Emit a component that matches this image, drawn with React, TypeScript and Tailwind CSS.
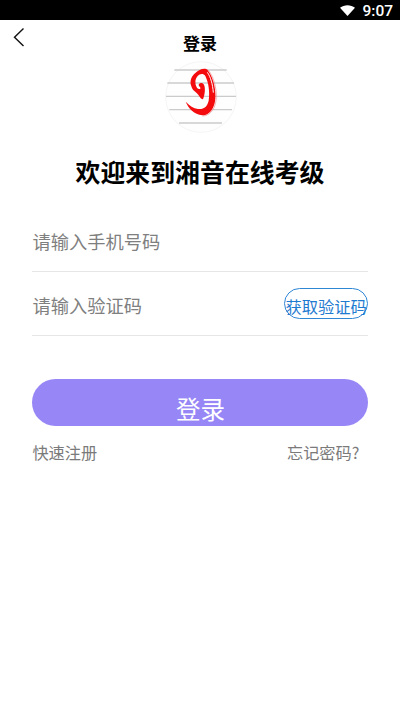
import type { FC, ReactNode } from 'react';

const StatusBar: FC = () => (
  <div className="flex h-5 items-center justify-end gap-[7px] bg-black pr-[7px] text-white">
    <svg width="15" height="11" viewBox="0 0 15 11" fill="currentColor">
      <path d="M0 2.7C4.2-.7 10.8-.7 15 2.7L7.5 11Z" />
    </svg>
    <span className="translate-y-px font-[Roboto,sans-serif] text-[15.5px] leading-5 font-medium">9:07</span>
  </div>
);

const Logo: FC = () => (
  <svg width="72" height="72" viewBox="45 15 216 216" className="mx-auto translate-x-px">
    <circle cx="153" cy="123" r="106" fill="#fefefe" stroke="#f5f5f5" strokeWidth="3" />
    <path
      d="M73 42H230M52 81H252M48 121H258M58 161H246M87 201H216"
      stroke="#cbcbcb"
      strokeWidth="4"
    />
    {/* brush stroke: outer sweep, then the inner curl */}
    <path
      fill="#f30b0e"
      d="M107 137C119 149 130 157 144 159C162 161 172 151 176 134C180 110 176 80 166 60C160 51 149 53 143 60C136 68 135 76 137 86C139 94 144 101 151 98C153 95 148 93 146 88C145 80 156 78 161 85C167 93 165 116 159 130C150 128 148 118 139 110C132 105 126 100 124 91C118 76 124 61 136 51C146 42 157 36 169 39C182 49 194 79 196 110C199 150 182 178 157 178C132 175 116 158 107 137Z"
    />
    <path d="M172 49C182 63 188 85 190 110" fill="none" stroke="#fff" strokeWidth="3" />
    <path
      d="M171 39C185 50 198 83 199 117C200 153 183 180 157 180"
      fill="none"
      stroke="#ec8f92"
      strokeWidth="2"
    />
  </svg>
);

const Field: FC<{ label: string; children?: ReactNode }> = ({ label, children }) => (
  <div className="flex h-16 items-center justify-between border-b border-[#e6e6e6]">
    <input
      aria-label={label}
      placeholder={label}
      className="mt-0.5 w-60 min-w-0 text-[18.3px] leading-7 outline-none placeholder:text-[#7f7f7f]"
    />
    {children}
  </div>
);

export default function App() {
  return (
    <div className="h-[711px] overflow-hidden bg-white font-['Noto_Sans_CJK_SC',sans-serif] text-black">
      <StatusBar />

      <header className="grid h-[41px] grid-cols-[40px_1fr_40px] items-center">
        <button aria-label="返回" className="mb-[7px] pl-[13px]">
          <svg width="12" height="20" viewBox="0 0 12 20" fill="none" stroke="#111" strokeWidth="1.4">
            <path d="M10.5 1.5 1.5 10.2l9 8.8" />
          </svg>
        </button>
        <h1 className="mt-1 text-center text-[17px] leading-6 font-bold">登录</h1>
      </header>

      <Logo />

      <h2 className="mt-5 text-center text-[24.9px] leading-9 font-bold">欢迎来到湘音在线考级</h2>

      <main className="mr-[31.6px] ml-[32.4px] mt-[19px]">
        <Field label="请输入手机号码" />
        <Field label="请输入验证码">
          <button className="h-[31px] w-[84.6px] shrink-0 rounded-full border border-[#2e86d5] pt-[5px] text-[16.3px] leading-6 whitespace-nowrap text-[#1f7bd0]">
            <span className="-mx-1">获取验证码</span>
          </button>
        </Field>

        <button className="mt-[43px] block h-[47px] w-full rounded-full bg-[#9787f6] pt-3 text-[24.5px] leading-[35px] text-white">
          登录
        </button>

        <div className="mt-[14px] flex justify-between pr-[9px] text-[16.2px] leading-6 text-[#7a7a7a]">
          <a>快速注册</a>
          <a>忘记密码?</a>
        </div>
      </main>
    </div>
  );
}
